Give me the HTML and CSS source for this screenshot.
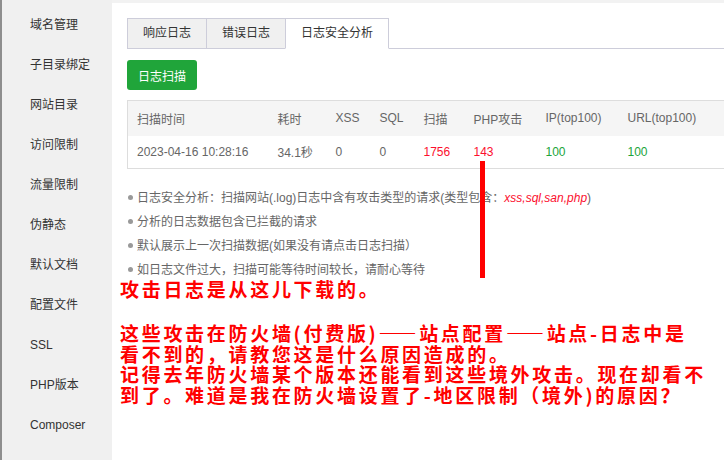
FILE: index.html
```html
<!DOCTYPE html>
<html lang="zh-CN">
<head>
  <meta charset="UTF-8" />
  <title>日志安全分析</title>
  <link rel="stylesheet" href="styles.css">
</head>
<body>

  <div class="edge"></div>

  <div class="sidebar">
    <div class="nav-item">域名管理</div>
    <div class="nav-item">子目录绑定</div>
    <div class="nav-item">网站目录</div>
    <div class="nav-item">访问限制</div>
    <div class="nav-item">流量限制</div>
    <div class="nav-item">伪静态</div>
    <div class="nav-item">默认文档</div>
    <div class="nav-item">配置文件</div>
    <div class="nav-item">SSL</div>
    <div class="nav-item">PHP版本</div>
    <div class="nav-item">Composer</div>
    <div class="nav-item">Tomcat</div>
  </div>

  <div class="main">
    <div class="tabs">
      <div class="tab">响应日志</div>
      <div class="tab">错误日志</div>
      <div class="tab active">日志安全分析</div>
      <div class="tab-rest"></div>
    </div>

    <button class="btn-scan">日志扫描</button>

    <table class="scan-table">
      <colgroup>
        <col style="width:141px"><col style="width:58px"><col style="width:44px"><col style="width:44px">
        <col style="width:50px"><col style="width:72px"><col style="width:82px"><col style="width:120px">
      </colgroup>
      <thead>
        <tr>
          <th>扫描时间</th><th>耗时</th><th>XSS</th><th>SQL</th><th>扫描</th><th>PHP攻击</th><th>IP(top100)</th><th>URL(top100)</th>
        </tr>
      </thead>
      <tbody>
        <tr>
          <td>2023-04-16 10:28:16</td><td>34.1秒</td><td>0</td><td>0</td>
          <td class="red">1756</td><td class="red">143</td><td class="green">100</td><td class="green">100</td>
        </tr>
      </tbody>
    </table>

    <ul class="tips">
      <li>日志安全分析：扫描网站(.log)日志中含有攻击类型的请求(类型包含：<em>xss,sql,san,php</em>)</li>
      <li>分析的日志数据包含已拦截的请求</li>
      <li>默认展示上一次扫描数据(如果没有请点击日志扫描）</li>
      <li>如日志文件过大，扫描可能等待时间较长，请耐心等待</li>
    </ul>

    <div class="note">
      <p class="note-lead">攻击日志是从这儿下载的。</p>
      <p>这些攻击在防火墙(付费版)——站点配置——站点-日志中是<br>看不到的，请教您这是什么原因造成的。<br>记得去年防火墙某个版本还能看到这些境外攻击。现在却看不<br>到了。难道是我在防火墙设置了-地区限制（境外)的原因？</p>
    </div>

    <div class="marker"></div>
  </div>

</body>
</html>
```

FILE: styles.css
```css
* {
  margin: 0;
  padding: 0;
  box-sizing: border-box;
}

html, body {
  height: 100%;
  overflow: hidden;
}

body {
  display: flex;
  font-family: "Liberation Sans", "Noto Sans CJK SC", sans-serif;
  font-size: 12px;
  color: #333;
  background: #fff;
}

.edge {
  width: 2px;
  flex-shrink: 0;
  background: #8e8e8e;
}

.sidebar {
  width: 110px;
  flex-shrink: 0;
  background: #f0f0f0;
  padding-top: 5px;
}

.nav-item {
  height: 40px;
  line-height: 40px;
  padding-left: 28px;
  color: #333;
  white-space: nowrap;
}

.main {
  position: relative;
  flex: 1;
  min-width: 0;
  border-top: 3px solid #f2f2f2;
  padding: 15px 0 0 15px;
  overflow: hidden;
}

.tabs {
  display: flex;
  height: 31px;
}

.tab {
  width: 79px;
  line-height: 29px;
  text-align: center;
  background: #f0f0f0;
  border: 1px solid #cdcdda;
  border-right: none;
  color: #333;
}

.tab.active {
  width: 104px;
  background: #fff;
  border-right: 1px solid #cdcdda;
  border-bottom-color: #fff;
}

.tab-rest {
  flex: 1;
  border-bottom: 1px solid #cdcdda;
}

.btn-scan {
  display: block;
  margin-top: 11px;
  width: 70px;
  height: 30px;
  border: none;
  border-radius: 3px;
  background: #20a53a;
  color: #fff;
  font-family: inherit;
  font-size: 12px;
}

.scan-table {
  margin-top: 10px;
  width: 611px;
  table-layout: fixed;
  border-collapse: collapse;
  border: 1px solid #ddd;
  color: #666;
}

.scan-table th {
  height: 35px;
  background: #f5f5f5;
  font-weight: normal;
  text-align: left;
  padding-left: 9px;
  white-space: nowrap;
}

.scan-table td {
  height: 33px;
  padding-left: 9px;
  white-space: nowrap;
}

.scan-table .red {
  color: #fc0f2e;
}

.scan-table .green {
  color: #20a53a;
}

.tips {
  list-style: none;
  margin-top: 17px;
  color: #666;
}

.tips li {
  line-height: 24px;
  white-space: nowrap;
}

.tips li::before {
  content: "";
  display: inline-block;
  width: 5px;
  height: 5px;
  border-radius: 50%;
  background: #999;
  margin: 0 4px 2px 1px;
  vertical-align: middle;
}

.tips em {
  color: #fc0f2e;
}

.note {
  margin: -3px 0 0 -7px;
  color: #f00;
  font-family: "Noto Sans CJK SC", sans-serif;
  font-size: 19px;
  font-weight: bold;
  line-height: 20.5px;
  letter-spacing: 2.7px;
  white-space: nowrap;
}

.note-lead {
  margin-bottom: 23.5px;
}

.marker {
  position: absolute;
  left: 368px;
  top: 158px;
  width: 5px;
  height: 117px;
  background: #f00;
}
```
